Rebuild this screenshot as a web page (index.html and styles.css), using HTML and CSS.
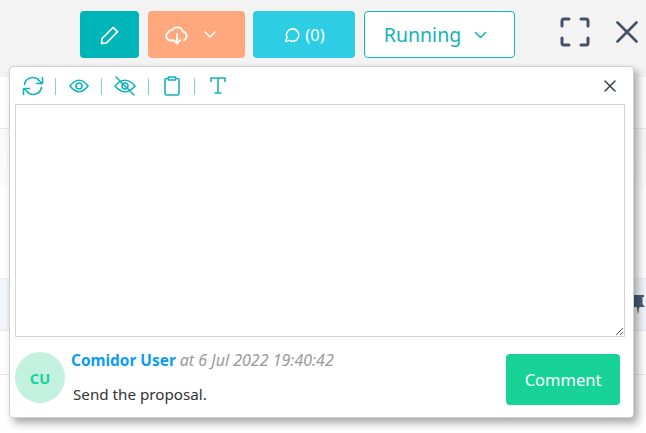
FILE: index.html
```html
<!DOCTYPE html>
<html lang="en">
<head>
  <meta charset="UTF-8" />
  <title>Task comments</title>
  <link rel="stylesheet" href="styles.css">
</head>
<body>
  <header class="topbar">
    <button class="btn btn-edit" aria-label="Edit">
      <svg width="20" height="20" viewBox="0 0 20 20" fill="none" stroke="#fff" stroke-width="1.7" stroke-linejoin="round"><path d="M1.5 18.5 L2 13.6 L13 2.5 L17.6 6.6 L6.4 18 Z"/></svg>
    </button>
    <button class="btn btn-download" aria-label="Download">
      <svg width="24" height="20" viewBox="0 0 24 20" fill="none" stroke="#fff" stroke-width="1.8" stroke-linecap="round" stroke-linejoin="round"><path d="M7.5 15.5 H5.5 A4.4 4.4 0 0 1 3 7.6 A4 4 0 0 1 7.2 5.2 A6 6 0 0 1 18 6.6 A4.6 4.6 0 0 1 19 15.2"/><path d="M12 9 V18.5 M8.6 15.2 L12 18.5 L15.4 15.2"/></svg>
      <svg width="12" height="7" viewBox="0 0 12 7" fill="none" stroke="#fff" stroke-width="1.7" stroke-linecap="round" stroke-linejoin="round"><path d="M1 1 L6 6 L11 1"/></svg>
    </button>
    <button class="btn btn-comments">
      <svg width="18" height="18" viewBox="0 0 18 18" fill="none" stroke="#fff" stroke-width="1.6" stroke-linejoin="round"><path d="M2.5 15.5 L4 11.8 A6.2 6.2 0 1 1 6.4 14.4 Q4.5 15.4 2.5 15.5 Z"/></svg>
      <span>(0)</span>
    </button>
    <button class="btn btn-status">
      <span>Running</span>
      <svg width="13" height="8" viewBox="0 0 13 8" fill="none" stroke="#14b3b9" stroke-width="1.5" stroke-linecap="round" stroke-linejoin="round"><path d="M1.5 1.5 L6.5 6.5 L11.5 1.5"/></svg>
    </button>
    <svg class="icon-expand" width="30" height="30" viewBox="0 0 30 30" fill="none" stroke="#44506a" stroke-width="3" stroke-linecap="round" stroke-linejoin="round"><path d="M2 9 V4 Q2 2 4 2 H9 M21 2 H26 Q28 2 28 4 V9 M28 21 V26 Q28 28 26 28 H21 M9 28 H4 Q2 28 2 26 V21"/></svg>
    <svg class="icon-close" width="22" height="22" viewBox="0 0 22 22" fill="none" stroke="#44506a" stroke-width="2.6" stroke-linecap="round"><path d="M1.5 1.5 L20.5 20.5 M20.5 1.5 L1.5 20.5"/></svg>
  </header>

  <main class="rows">
    <div class="row row-plain"></div>
    <div class="row row-fade"></div>
    <div class="row row-gap"></div>
    <div class="row row-blue">
      <svg class="pin" width="16" height="22" viewBox="0 0 16 22"><path d="M3 1 H14 V3 H12.5 V10 L15 13 H9.5 L8 20 L6.5 13 H1 L3.5 10 V3 H3 Z" fill="#4a5a78"/><path d="M7.4 14 H8.6 L8 21 Z" fill="#c98a4a"/></svg>
    </div>
    <div class="row row-last"></div>
  </main>

  <section class="comment-popup">
    <div class="toolbar">
      <svg class="tool tool-refresh" width="22" height="20" viewBox="0 0 22 20" fill="none" stroke="#14b3b9" stroke-width="1.6" stroke-linecap="round" stroke-linejoin="round"><path d="M2.5 8.5 A8.4 8.4 0 0 1 17.5 5 L20 7.5 M20.5 1.5 V7.5 H14.5"/><path d="M19.5 11.5 A8.4 8.4 0 0 1 4.5 15 L2 12.5 M1.5 18.5 V12.5 H7.5"/></svg>
      <i class="sep"></i>
      <svg class="tool tool-eye" width="20" height="16" viewBox="0 0 20 16" fill="none" stroke="#14b3b9" stroke-width="1.6"><path d="M1 8 Q10 -3.5 19 8 Q10 19.5 1 8 Z"/><circle cx="10" cy="8" r="3"/></svg>
      <i class="sep"></i>
      <svg class="tool tool-eye-off" width="22" height="20" viewBox="0 0 22 20" fill="none" stroke="#14b3b9" stroke-width="1.6"><path d="M1 10 Q11 -1.5 21 10 Q11 21.5 1 10 Z"/><circle cx="11" cy="10" r="3"/><path d="M2 1 L20 19" stroke-linecap="round"/></svg>
      <i class="sep"></i>
      <svg class="tool tool-clip" width="16" height="20" viewBox="0 0 16 20" fill="none" stroke="#14b3b9" stroke-width="1.6" stroke-linejoin="round"><path d="M4.5 2.5 H2.5 Q1 2.5 1 4 V17.5 Q1 19 2.5 19 H13.5 Q15 19 15 17.5 V4 Q15 2.5 13.5 2.5 H11.5"/><path d="M4.5 1 H11.5 V4 H4.5 Z"/></svg>
      <i class="sep"></i>
      <svg class="tool tool-text" width="16" height="17" viewBox="0 0 16 17" fill="none" stroke="#14b3b9" stroke-width="1.6" stroke-linecap="round"><path d="M1 4.5 V1 H15 V4.5 M8 1 V16 M5 16 H11"/></svg>
      <svg class="popup-close" width="12" height="12" viewBox="0 0 12 12" fill="none" stroke="#3a3f4a" stroke-width="1.5" stroke-linecap="round"><path d="M1 1 L11 11 M11 1 L1 11"/></svg>
    </div>
    <textarea class="comment-input"></textarea>
    <div class="comment-foot">
      <div class="avatar">CU</div>
      <div class="comment-body">
        <p class="comment-meta"><b>Comidor User</b> <em>at 6 Jul 2022 19:40:42</em></p>
        <p class="comment-text">Send the proposal.</p>
      </div>
      <button class="btn-comment">Comment</button>
    </div>
  </section>
</body>
</html>
```

FILE: styles.css
```css
* {
  box-sizing: border-box;
}
html, body {
  height: 433px;
  overflow: hidden;
}
body {
  margin: 0;
  background: #fff;
  font-family: "Noto Sans", "Open Sans", sans-serif;
  color: #333;
}
.topbar {
  display: flex;
  align-items: center;
  height: 77px;
  padding: 11px 0 19px 80px;
  background: #f3f3f3;
}
.btn {
  display: flex;
  align-items: center;
  justify-content: center;
  height: 47px;
  padding: 0;
  border: none;
  border-radius: 4px;
  color: #fff;
  font-family: inherit;
}
.btn-edit {
  width: 59px;
  background: #00b5b8;
}
.btn-download {
  width: 97px;
  margin-left: 9px;
  padding-right: 12px;
  gap: 15px;
  background: #ffa87d;
}
.btn-comments {
  width: 102px;
  margin-left: 8px;
  gap: 4px;
  background: #2dcee3;
  font-size: 16.5px;
}
.btn-status {
  width: 151px;
  margin-left: 9px;
  padding-right: 8px;
  gap: 13px;
  background: #fff;
  border: 1px solid #14b3b9;
  color: #14b3b9;
  font-size: 19.5px;
}
.icon-expand {
  margin: 0 0 5px 45px;
}
.icon-close {
  margin: 0 0 5px 26px;
}

.row {
  border-bottom: 1px solid #e8e8e8;
}
.row-plain {
  height: 52px;
}
.row-fade {
  height: 58px;
  border-bottom: none;
  background: linear-gradient(#fafafa, #fcfcfc);
}
.row-gap {
  height: 91px;
  border-bottom: none;
}
.row-blue {
  display: flex;
  justify-content: flex-end;
  align-items: center;
  height: 53px;
  background: #f2f6fa;
  border-top: 1px solid #e6ecf2;
  border-bottom: 1px solid #e6ecf2;
}
.row-last {
  height: 44px;
}

.comment-popup {
  position: absolute;
  left: 9px;
  top: 66px;
  width: 625px;
  height: 352px;
  padding: 0 8px 0 5px;
  background: #fff;
  border: 1px solid #d0d0d0;
  border-radius: 4px;
  box-shadow: 4px 5px 8px rgba(0, 0, 0, 0.35);
}
.toolbar {
  display: flex;
  align-items: center;
  height: 37px;
  padding-left: 7px;
}
.sep {
  width: 1px;
  height: 17px;
  margin-top: 2px;
  background: #7fd3e0;
}
.tool-refresh {
  margin-right: 11px;
}
.tool-eye {
  margin: 0 12px 0 13px;
}
.tool-eye-off {
  margin: 0 12px 0 12px;
}
.tool-clip {
  margin: 0 14px 0 15px;
}
.tool-text {
  margin-left: 15px;
}
.popup-close {
  margin-left: auto;
  margin-right: 9px;
}
.comment-input {
  display: block;
  width: 610px;
  height: 233px;
  margin: 0;
  background: #fff;
  border: 1px solid #d5d5d5;
  outline: none;
}
.comment-foot {
  display: flex;
  align-items: flex-start;
  padding-top: 15px;
}
.avatar {
  display: flex;
  align-items: center;
  justify-content: center;
  flex: none;
  width: 50px;
  height: 51px;
  border-radius: 50%;
  background: #c3f1e0;
  color: #17d398;
  font-size: 14.5px;
  font-weight: 700;
}
.comment-body {
  flex: 1;
  margin-left: 6px;
}
.comment-meta {
  margin: -2px 0 0;
  font-size: 15.4px;
  line-height: 20px;
  white-space: nowrap;
}
.comment-meta b {
  color: #0d9cf0;
}
.comment-meta em {
  font-size: 16px;
  color: #9a9a9a;
}
.comment-text {
  margin: 13px 0 0;
  padding-left: 2px;
  font-size: 15.2px;
  line-height: 20px;
  color: #333;
}
.btn-comment {
  flex: none;
  width: 114px;
  height: 51px;
  margin: 2px 5px 0 0;
  border: none;
  border-radius: 4px;
  background: #17d398;
  color: #fff;
  font-family: inherit;
  font-size: 16.5px;
}
```
